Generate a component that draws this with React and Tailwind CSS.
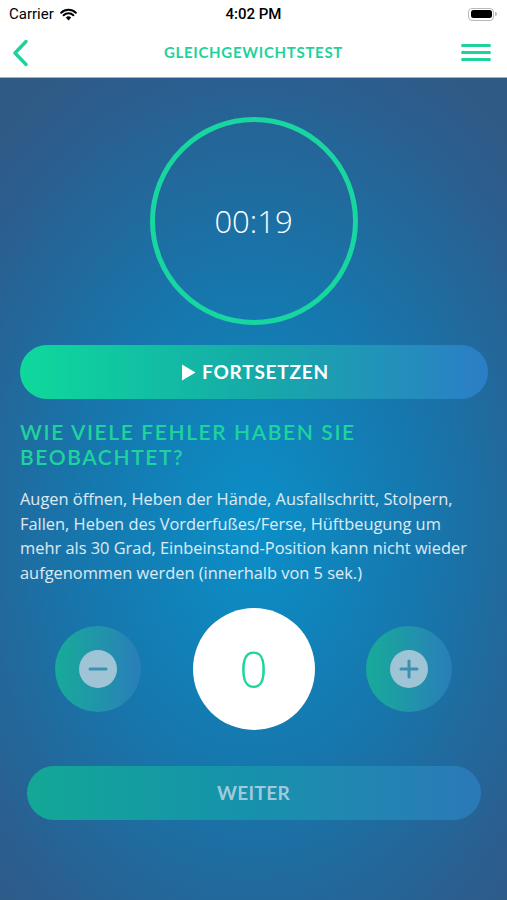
const sans = { fontFamily: '"Open Sans", "Liberation Sans", sans-serif' }

function StatusBar() {
  return (
    <div className="flex h-[28px] items-center justify-between bg-white px-[9px] text-black font-['Roboto',sans-serif]">
      <div className="flex w-[120px] items-center gap-[6px] text-[15px]">
        <span>Carrier</span>
        <svg width="17" height="13" viewBox="0 0 17 13">
          <path d="M8.5 12.5 L5.8 9.4 A4 4 0 0 1 11.2 9.4 Z" fill="#000" />
          <path d="M3.6 7.3 A7 7 0 0 1 13.4 7.3" stroke="#000" strokeWidth="2" fill="none" strokeLinecap="round" />
          <path d="M1.2 4.8 A10.5 10.5 0 0 1 15.8 4.8" stroke="#000" strokeWidth="2" fill="none" strokeLinecap="round" />
        </svg>
      </div>
      <span className="text-[15px] font-medium">4:02 PM</span>
      <div className="flex w-[120px] justify-end pr-[1px]">
        <div className="flex items-center">
          <div className="flex h-[13px] w-[26px] items-center rounded-[4px] border border-[#b9b9b9] p-[1.5px]">
            <div className="h-full w-full rounded-[2.5px] bg-black" />
          </div>
          <div className="ml-[1px] h-[4px] w-[1.5px] rounded-r bg-[#b9b9b9]" />
        </div>
      </div>
    </div>
  )
}

function NavBar() {
  return (
    <div className="grid h-[50px] grid-cols-[1fr_auto_1fr] items-center border-b border-[#9fb0c2] bg-white px-[16px]">
      <svg width="20" height="28" viewBox="0 0 20 28" className="-ml-[8px]">
        <path d="M18 2.5 L7 14 L18 25.5" stroke="#1dd39b" strokeWidth="3.4" fill="none" strokeLinecap="round" strokeLinejoin="round" />
      </svg>
      <span className="font-['Lato',sans-serif] text-[15px] font-bold tracking-[0.7px] text-[#1dd39b]">
        GLEICHGEWICHTSTEST
      </span>
      <div className="flex w-[30px] flex-col gap-[4px] justify-self-end">
        <div className="h-[3px] rounded bg-[#1dd39b]" />
        <div className="h-[3px] rounded bg-[#1dd39b]" />
        <div className="h-[3px] rounded bg-[#1dd39b]" />
      </div>
    </div>
  )
}

function RoundButton({ plus }) {
  return (
    <div className="flex h-[86px] w-[86px] items-center justify-center rounded-full bg-gradient-to-r from-[#17ab98] to-[#2a7db9]">
      <div className="flex h-[38px] w-[38px] items-center justify-center rounded-full bg-[#9fc4d6]">
        <svg width="22" height="22" viewBox="0 0 22 22">
          <path d="M3 11 H19" stroke="#3f8fae" strokeWidth="3" strokeLinecap="round" />
          {plus && <path d="M11 3 V19" stroke="#3f8fae" strokeWidth="3" strokeLinecap="round" />}
        </svg>
      </div>
    </div>
  )
}

export default function App() {
  return (
    <div className="flex h-[900px] w-[507px] flex-col overflow-hidden">
      <StatusBar />
      <NavBar />
      <div className="flex flex-1 flex-col items-center bg-[radial-gradient(ellipse_75%_65%_at_50%_55%,#0b8fc8_0%,#1677ad_45%,#2a5f90_85%,#305a86_100%)]">
        <div className="mt-[39px] flex h-[208px] w-[208px] items-center justify-center rounded-full border-[5px] border-[#18d69f]">
          <span className="text-[31px] font-light text-white" style={sans}>00:19</span>
        </div>

        <button className="mt-[20px] flex h-[54px] w-[468px] items-center justify-center gap-[6px] rounded-full bg-gradient-to-r from-[#0fd99b] via-[#16aaa8] to-[#2b7dc6] pl-[3px] font-['Lato',sans-serif] text-[19px] font-bold text-white">
          <svg width="15" height="17" viewBox="0 0 15 17">
            <path d="M1 0.5 L14.5 8.5 L1 16.5 Z" fill="#fff" />
          </svg>
          <span className="tracking-[0.8px]">FORTSETZEN</span>
        </button>

        <div className="mt-[20px] w-[467px]">
          <h2 className="font-['Lato',sans-serif] text-[21px] font-semibold leading-[25px] tracking-[1.6px] text-[#1ed49c]">
            WIE VIELE FEHLER HABEN SIE BEOBACHTET?
          </h2>
          <p className="mt-[18px] w-[460px] text-[16.4px] leading-[24.5px] text-white/85" style={sans}>
            Augen öffnen, Heben der Hände, Ausfallschritt, Stolpern, Fallen, Heben des Vorderfußes/Ferse, Hüftbeugung um mehr als 30 Grad, Einbeinstand-Position kann nicht wieder aufgenommen werden (innerhalb von 5 sek.)
          </p>
        </div>

        <div className="mt-[23px] flex w-[397px] items-center justify-between">
          <RoundButton />
          <div className="flex h-[122px] w-[122px] items-center justify-center rounded-full bg-white">
            <span className="text-[50px] font-light text-[#1ed69c]" style={sans}>0</span>
          </div>
          <RoundButton plus />
        </div>

        <button className="mt-[36px] flex h-[54px] w-[454px] items-center justify-center rounded-full bg-gradient-to-r from-[#14a796] via-[#1791ac] to-[#2a79b8] font-['Lato',sans-serif] text-[19px] font-bold tracking-[0.3px] text-[#9fcadd]">
          WEITER
        </button>
      </div>
    </div>
  )
}
